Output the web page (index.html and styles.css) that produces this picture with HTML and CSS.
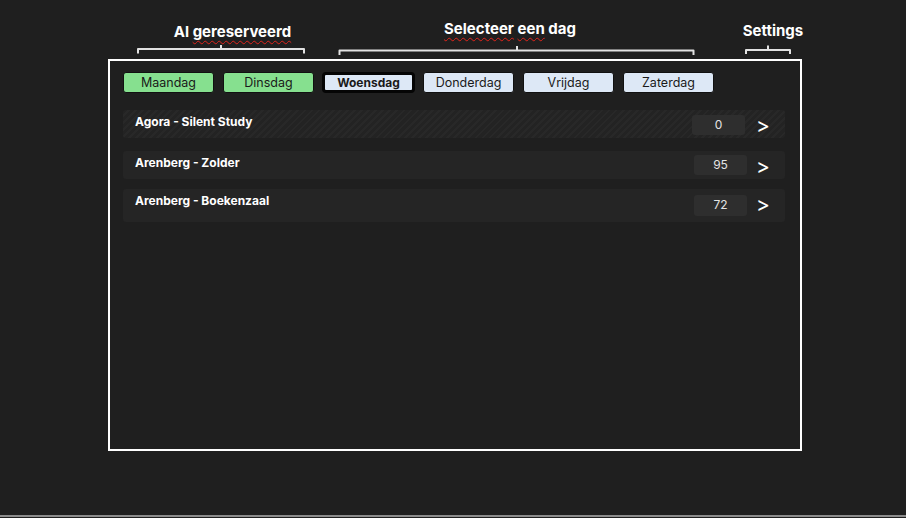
FILE: index.html
```html
<!DOCTYPE html>
<html lang="nl">
<head>
<meta charset="utf-8">
<title>Reserveringen</title>
<link rel="stylesheet" href="styles.css">
</head>
<body>
<div class="page">
  <header class="annot">
    <div class="labels">
      <div class="label label-1">Al <span class="spell">gereserveerd</span></div>
      <div class="label label-2"><span class="spell">Selecteer</span> <span class="spell">een</span> dag</div>
      <div class="label label-3">Settings</div>
    </div>
    <svg class="braces" width="906" height="15" viewBox="0 0 906 15" aria-hidden="true">
      <g fill="none" stroke="#e2e2e2" stroke-width="2" stroke-linejoin="round">
        <path d="M138 9.5 V5 H304 V9.5"/>
        <path d="M221 5 V1"/>
        <path d="M339.5 11 V6.5 H693.5 V11"/>
        <path d="M517 6.5 V2"/>
        <path d="M746 10 V6 H790 V10"/>
        <path d="M768 6 V1.5"/>
      </g>
    </svg>
  </header>

  <main class="frame">
    <nav class="days">
      <button class="day reserved">Maandag</button>
      <button class="day reserved">Dinsdag</button>
      <button class="day free active">Woensdag</button>
      <button class="day free">Donderdag</button>
      <button class="day free">Vrijdag</button>
      <button class="day free">Zaterdag</button>
    </nav>

    <ul class="rooms">
      <li class="room striped">
        <span class="room-name">Agora - Silent Study</span>
        <span class="count count-first">0</span>
        <span class="chev">&gt;</span>
      </li>
      <li class="room">
        <span class="room-name">Arenberg - Zolder</span>
        <span class="count">95</span>
        <span class="chev">&gt;</span>
      </li>
      <li class="room tall">
        <span class="room-name">Arenberg - Boekenzaal</span>
        <span class="count count-low">72</span>
        <span class="chev">&gt;</span>
      </li>
    </ul>
  </main>

  <div class="bottom-line"></div>
</div>
</body>
</html>
```

FILE: styles.css
```css
* { box-sizing: border-box; }

html, body {
  margin: 0;
  padding: 0;
  background: #1f1f1f;
}

body {
  font-family: Inter, "Open Sans", "Liberation Sans", sans-serif;
  color: #fff;
  width: 906px;
  height: 518px;
  overflow: hidden;
}

.page {
  width: 906px;
  height: 518px;
}

/* annotations */
.annot {
  height: 59px;
}

.labels {
  display: flex;
  align-items: flex-start;
  height: 44px;
  padding-left: 132px;
}

.label {
  font-weight: 700;
  font-size: 15px;
  line-height: 18px;
  text-align: center;
  white-space: nowrap;
  color: #fff;
}

.label-1 { width: 201px; margin-top: 23px; }
.label-2 { width: 200px; margin-left: 77px; margin-top: 20px; }
.label-3 { width: 100px; margin-left: 113px; margin-top: 22px; }

.spell {
  text-decoration: underline wavy #e0241b;
  text-decoration-thickness: 1px;
  text-underline-offset: 3px;
}

.braces {
  display: block;
}

/* main frame */
.frame {
  margin-left: 108px;
  width: 694px;
  height: 392px;
  border: 2px solid #fff;
  padding: 11px 15px 0 13px;
}

.days {
  display: flex;
  gap: 9px;
  height: 21px;
}

.day {
  width: 91px;
  height: 21px;
  padding: 0;
  border: 1px solid #111;
  border-radius: 3px;
  font-family: inherit;
  font-size: 12.5px;
  line-height: 18px;
  color: #1a1a1a;
  cursor: pointer;
}

.day.reserved { background: #86e08f; }
.day.free { background: #dde8f6; }

.day.active {
  width: 93px;
  margin: 0 -1px;
  border: 3px solid #050505;
  border-radius: 4px;
  font-weight: 700;
  font-size: 12px;
  line-height: 15px;
}

.rooms {
  list-style: none;
  margin: 17px 0 0;
  padding: 0;
  width: 662px;
}

.room {
  display: flex;
  align-items: flex-start;
  height: 28px;
  margin-bottom: 13px;
  background: #252525;
  border-radius: 3px;
  padding-left: 12px;
}

.room + .room + .room { height: 33px; }
.room:nth-child(2) { margin-bottom: 10px; }

.room.striped {
  background: repeating-linear-gradient(
    135deg,
    #232323 0px,
    #232323 3px,
    #282828 3px,
    #282828 5px
  );
}

.room-name {
  flex: 1;
  font-weight: 700;
  font-size: 12px;
  line-height: 15px;
  padding-top: 4px;
  color: #fff;
}

.count {
  width: 53px;
  height: 20px;
  margin-top: 4px;
  background: #2e2e2e;
  border-radius: 3px;
  font-size: 12px;
  line-height: 20px;
  text-align: center;
  color: #e4e4e4;
}

.count-first { margin-top: 5px; margin-right: 2px; }
.count-low { margin-top: 6px; height: 21px; }

.chev {
  width: 14px;
  margin-left: 9px;
  margin-right: 15px;
  margin-top: 5px;
  font-size: 21px;
  line-height: 22px;
  color: #fff;
}

.bottom-line {
  margin-top: 64px;
  height: 2px;
  background: #8c8c8c;
}
```
